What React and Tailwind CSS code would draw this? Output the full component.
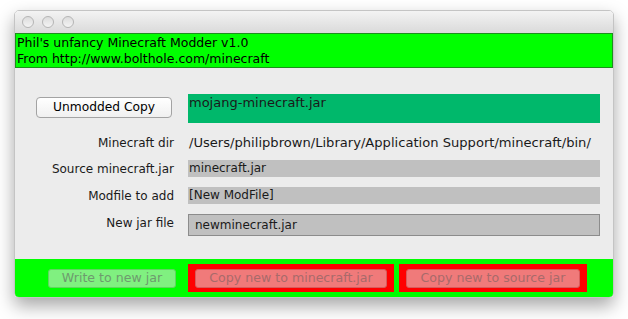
export default function App() {
  const font = { fontFamily: '"DejaVu Sans", "Liberation Sans", sans-serif' };
  return (
    <div className="w-[628px] h-[319px] bg-white pt-[10px] pl-[14px]" style={font}>
      <div className="w-[600px] h-[288px] flex flex-col rounded-[5px] overflow-hidden shadow-[0_8px_18px_rgba(0,0,0,0.35)] border border-[#c4c4c4]">
        {/* Title bar */}
        <div className="h-[22px] shrink-0 bg-gradient-to-b from-[#f3f3f3] to-[#dadada] flex items-center gap-[8px] pl-[7px]">
          <span className="w-[12px] h-[12px] rounded-full border border-[#b5b5b5] bg-gradient-to-b from-[#dcdcdc] to-[#f4f4f4]" />
          <span className="w-[12px] h-[12px] rounded-full border border-[#b5b5b5] bg-gradient-to-b from-[#dcdcdc] to-[#f4f4f4]" />
          <span className="w-[12px] h-[12px] rounded-full border border-[#b5b5b5] bg-gradient-to-b from-[#dcdcdc] to-[#f4f4f4]" />
        </div>

        {/* Header */}
        <div className="h-[35px] shrink-0 bg-[#00ff00] border border-[#1c8f1c] pl-[1px] text-[12.5px] leading-[16px] text-black pt-[1px]">
          <div>Phil's unfancy Minecraft Modder v1.0</div>
          <div>From http://www.bolthole.com/minecraft</div>
        </div>

        {/* Form */}
        <div className="flex-1 bg-[#ececec] flex flex-col pt-[26px] text-[12px] text-[#1a1a1a]">
          <div className="flex h-[29px]">
            <div className="w-[159px] flex justify-end">
              <button className="mt-[3px] mr-[2px] w-[136px] h-[21px] rounded-[4px] border border-[#a3a3a3] bg-gradient-to-b from-white to-[#f0f0f0] text-[12.25px] text-black leading-none">
                Unmodded Copy
              </button>
            </div>
            <div className="ml-[14px] w-[412px] bg-[#00b86b] pl-[1px] text-[13px] leading-[17px]">mojang-minecraft.jar</div>
          </div>

          <div className="flex h-[17px] mt-[11px] items-center">
            <div className="w-[159px] text-right">Minecraft dir</div>
            <div className="ml-[15px] w-[412px] whitespace-nowrap text-[13.1px]">/Users/philipbrown/Library/Application Support/minecraft/bin/</div>
          </div>

          <div className="flex h-[17px] mt-[9px] items-center">
            <div className="w-[159px] text-right">Source minecraft.jar</div>
            <div className="ml-[14px] w-[412px] h-full bg-[#c0c0c0] pl-[1px] leading-[17px]">minecraft.jar</div>
          </div>

          <div className="flex h-[17px] mt-[10px] items-center">
            <div className="w-[159px] text-right">Modfile to add</div>
            <div className="ml-[14px] w-[412px] h-full bg-[#c0c0c0] pl-[1px] leading-[17px]">[New ModFile]</div>
          </div>

          <div className="flex h-[22px] mt-[10px] items-center">
            <div className="w-[159px] text-right -mt-[4px]">New jar file</div>
            <div className="ml-[14px] w-[412px] h-full bg-[#c0c0c0] border border-[#8c8c8c] pl-[6px] leading-[20px]">newminecraft.jar</div>
          </div>
        </div>

        {/* Bottom bar */}
        <div className="h-[38px] shrink-0 bg-[#00ff00] flex items-center pl-[33px] text-[12.6px]">
          <button className="w-[128px] h-[19px] rounded-[3px] border border-[#5fd65f] bg-[#80f080] text-[#6e9a6e] leading-none">
            Write to new jar
          </button>
          <div className="ml-[12px] w-[206px] h-[28px] bg-[#ff0000] flex items-center justify-center">
            <button className="w-[192px] h-[19px] rounded-[3px] border border-[#d85c5c] bg-[#f07a7a] text-[#a86a6a] leading-none">
              Copy new to minecraft.jar
            </button>
          </div>
          <div className="ml-[5px] w-[188px] h-[28px] bg-[#ff0000] flex items-center justify-center">
            <button className="w-[174px] h-[19px] rounded-[3px] border border-[#d85c5c] bg-[#f07a7a] text-[#a86a6a] leading-none">
              Copy new to source jar
            </button>
          </div>
        </div>
      </div>
    </div>
  );
}
